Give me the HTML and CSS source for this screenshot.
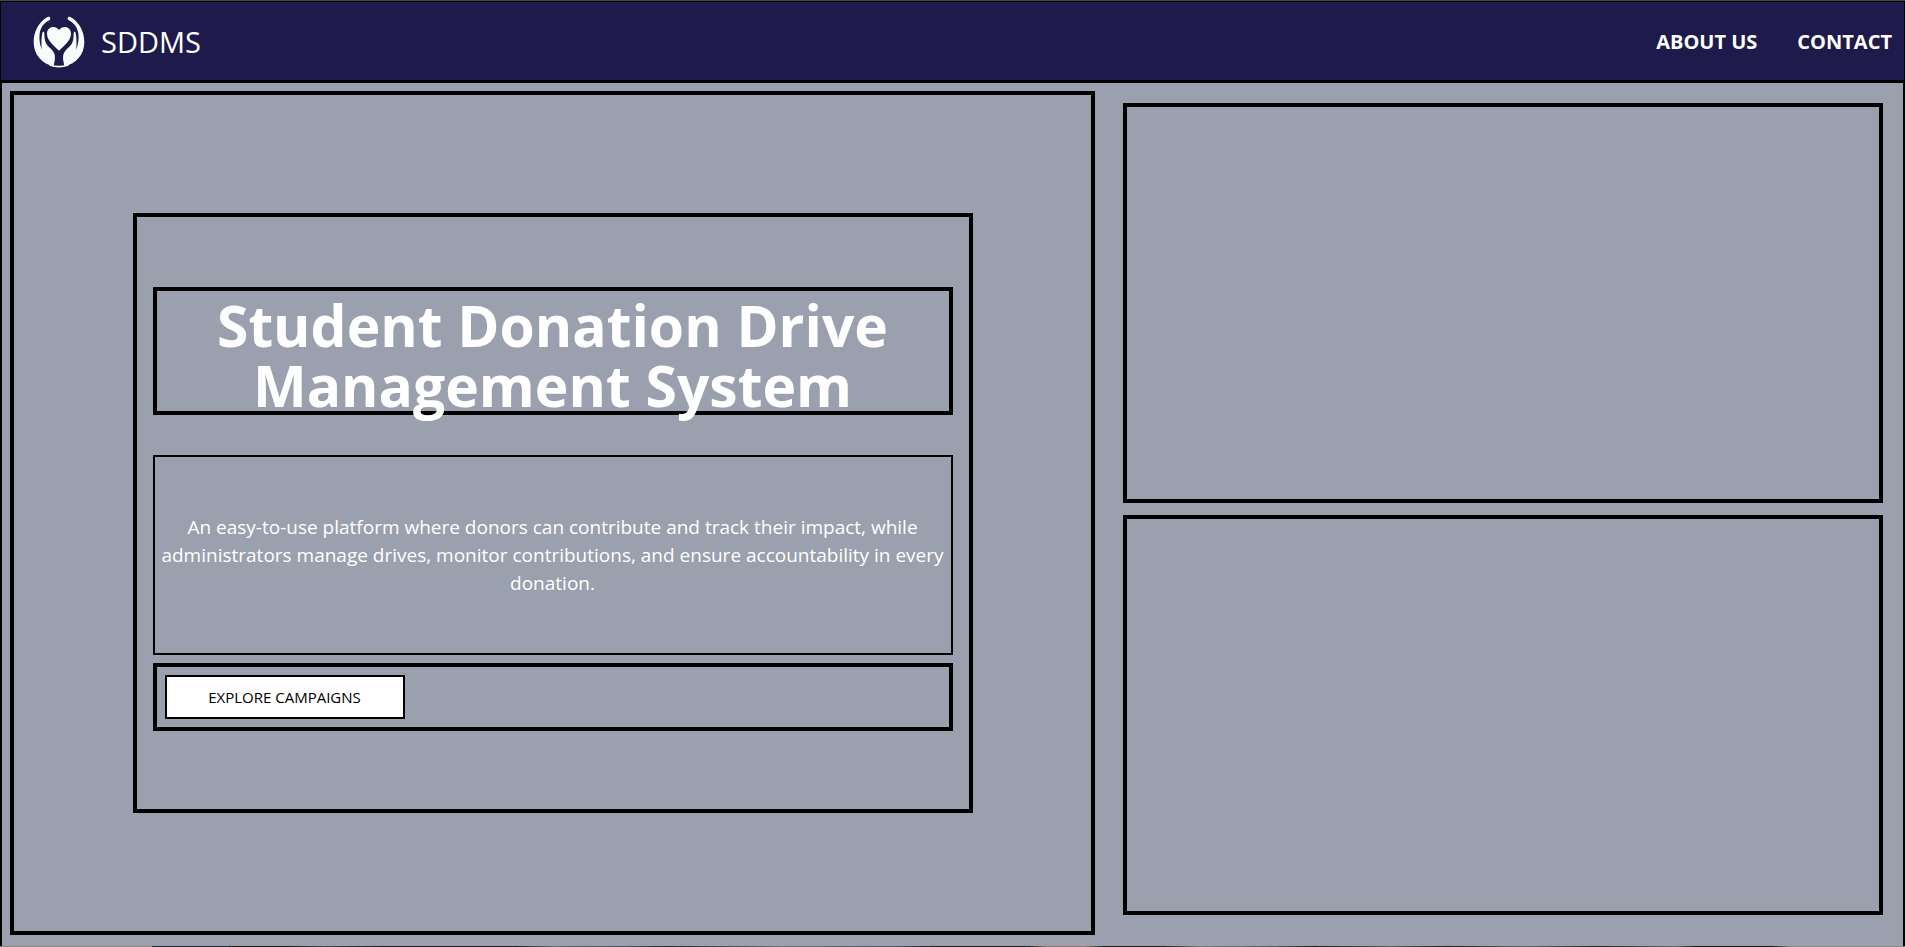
FILE: index.html
```html
<!DOCTYPE html>
<html lang="en">
<head>
  <meta charset="utf-8">
  <meta name="viewport" content="width=device-width, initial-scale=1">
  <title>SDDMS</title>
  <link rel="stylesheet" href="styles.css">
</head>
<body>
  <header class="navbar">
    <a class="brand" href="#">
      <svg class="brand-logo" viewBox="26 24 156 156" aria-hidden="true">
        <g fill="#fafcfc">
          <path d="M70 27C76 24 81 31 76 36C60 44 49 57 46 76C44 92 46 107 52 125C51 105 51 89 54 75C55 69 60 70 60 76C60 87 61 97 65 106C69 114 78 120 85 128C92 136 93 146 91 158L88 174C52 168 28 139 28 102C28 69 45 40 70 27Z"/>
          <path d="M138 27C132 24 127 31 132 36C148 44 159 57 162 76C164 92 162 107 156 125C157 105 157 89 154 75C153 69 148 70 148 76C148 87 147 97 143 106C139 114 130 120 123 128C116 136 115 146 117 158L120 174C156 168 180 139 180 102C180 69 163 40 138 27Z"/>
          <path d="M104 128C93 116 68 99 68 77C68 55 94 51 104 66C114 51 140 55 140 77C140 99 115 116 104 128Z"/>
        </g>
        <path d="M76 171Q104 181 132 171" fill="none" stroke="#fafcfc" stroke-width="5"/>
      </svg>
      <span>SDDMS</span>
    </a>
    <nav class="nav-links">
      <a href="#about">ABOUT US</a>
      <a href="#contact">CONTACT</a>
    </nav>
  </header>
  <main class="hero">
    <section class="hero-main">
      <div class="intro">
        <h1 class="intro-title">Student Donation Drive Management System</h1>
        <div class="intro-text">
          <p>An easy-to-use platform where donors can contribute and track their impact, while administrators manage drives, monitor contributions, and ensure accountability in every donation.</p>
        </div>
        <div class="intro-actions">
          <button class="explore" type="button">EXPLORE CAMPAIGNS</button>
        </div>
      </div>
    </section>
    <aside class="hero-side">
      <div class="side-box"></div>
      <div class="side-box"></div>
    </aside>
  </main>
  <div class="photo-edge"></div>
</body>
</html>
```
FILE: styles.css
```css
* {
  box-sizing: border-box;
}

body {
  margin: 0;
  border-top: 1px solid #444444;
  background: #9aa0ad;
  color: #ffffff;
  font-family: "Segoe UI", "Open Sans", "Noto Sans", sans-serif;
}

.navbar {
  display: flex;
  align-items: center;
  justify-content: space-between;
  min-height: 80px;
  padding: 2px 12px 0 32px;
  border: 1px solid #000000;
  background: #1e1a4b;
}

.brand {
  display: flex;
  align-items: center;
  gap: 16px;
  color: #ffffff;
  font-size: 29px;
  line-height: 40px;
  text-decoration: none;
}

.brand-logo {
  width: 52px;
  height: 52px;
}

.nav-links {
  display: flex;
  gap: 40px;
}

.nav-links a {
  color: #ffffff;
  font-size: 20px;
  font-weight: 700;
  line-height: 28px;
  text-decoration: none;
}

.hero {
  display: grid;
  grid-template-columns: 1101fr 800fr;
  border: solid #000000;
  border-width: 2px 2px 0;
}

.hero-main {
  display: flex;
  align-items: center;
  justify-content: center;
  margin: 8px 8px 11px;
  border: 4px solid #000000;
}

.intro {
  display: flex;
  flex-direction: column;
  justify-content: center;
  width: 100%;
  max-width: 840px;
  min-height: 600px;
  padding: 16px;
  border: 4px solid #000000;
}

.intro-title {
  height: 128px;
  margin: 0 0 40px;
  padding-top: 4px;
  border: 4px solid #000000;
  font-size: 57px;
  font-weight: 700;
  line-height: 60px;
  text-align: center;
}

.intro-text {
  display: flex;
  align-items: center;
  justify-content: center;
  min-height: 200px;
  border: 2px solid #000000;
}

.intro-text p {
  margin: 0;
  font-size: 19px;
  line-height: 28px;
  text-align: center;
}

.intro-actions {
  margin: 8px 0;
  padding: 8px;
  border: 4px solid #000000;
}

.explore {
  display: block;
  width: 240px;
  height: 44px;
  border: 2px solid #000000;
  background: #ffffff;
  color: #000000;
  font-family: inherit;
  font-size: 15px;
}

.hero-side {
  display: flex;
  flex-direction: column;
  gap: 12px;
  padding: 20px 20px 31px;
}

.side-box {
  min-height: 400px;
  border: 4px solid #000000;
}

.photo-edge {
  height: 1px;
  background: linear-gradient(90deg, #89888f 0 8%, #252a38 8% 12%, #17171f 12% 15%, #444653 17%, #1c1b27 20% 27%, #626572 29%, #4d505e 33%, #282a36 35%, #6a6c77 41%, #515666 47%, #211c27 49% 54%, #8a7775 55% 57%, #211c27 58% 61%, #737781 63%, #555966 67%, #1c1b24 69%, #5a5c67 73%, #201d26 76%, #626672 80%, #24232d 84%, #666975 88%, #17151e 89% 93%, #85868d 94% 100%);
}

@media (max-width: 1500px) {
  .intro-title {
    height: auto;
  }
}
```
